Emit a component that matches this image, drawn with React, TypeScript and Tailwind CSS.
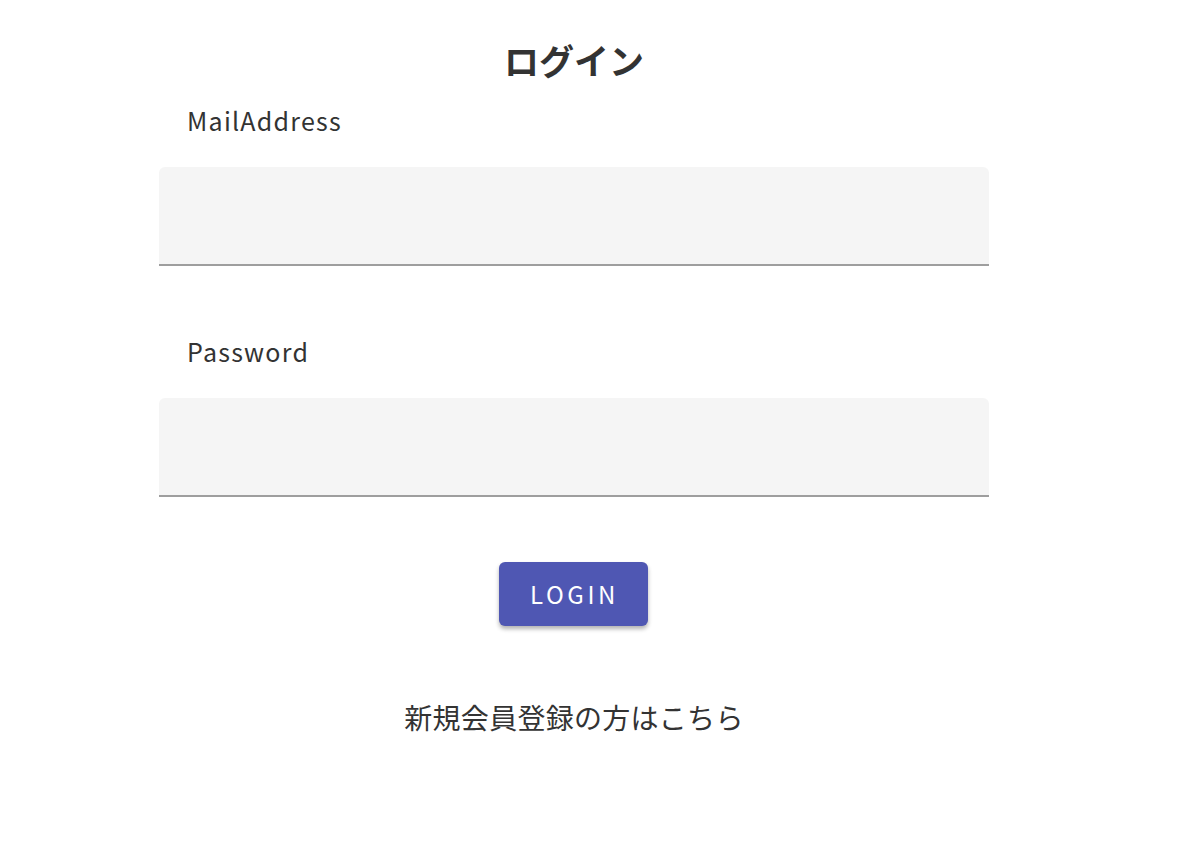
import React from "react";

const font = { fontFamily: '"Noto Sans CJK JP", "Noto Sans", sans-serif' };

const Field = ({ label, type }: { label: string; type: string }) => (
  <div className="flex flex-col">
    <label className="pl-7 text-[25px] leading-[36px] tracking-[0.05em] text-[#333]">{label}</label>
    <input
      type={type}
      className="mt-[29px] h-[99px] w-full rounded-t-md border-b-2 border-[#9e9e9e] bg-[#f5f5f5] px-4 text-[22px] outline-none"
    />
  </div>
);

export default function App() {
  return (
    <div className="min-h-[851px] bg-white" style={font}>
      <div className="ml-[159px] flex w-[830px] flex-col pt-[38px]">
        <h1 className="text-center text-[35px] font-bold leading-[44px] text-[#333]">ログイン</h1>
        <div className="mt-[20px]">
          <Field label="MailAddress" type="email" />
        </div>
        <div className="mt-[67px]">
          <Field label="Password" type="password" />
        </div>
        <div className="mt-[65px] flex justify-center">
          <button className="-ml-[2px] h-[64px] w-[149px] rounded-md bg-[#4f57b3] pl-[3px] text-[24px] tracking-[0.15em] text-white shadow-[0_3px_4px_rgba(0,0,0,0.3)]">
            LOGIN
          </button>
        </div>
        <a className="mt-[71px] text-center text-[28px] leading-[40px] tracking-[0.01em] text-[#333]">新規会員登録の方はこちら</a>
      </div>
    </div>
  );
}
